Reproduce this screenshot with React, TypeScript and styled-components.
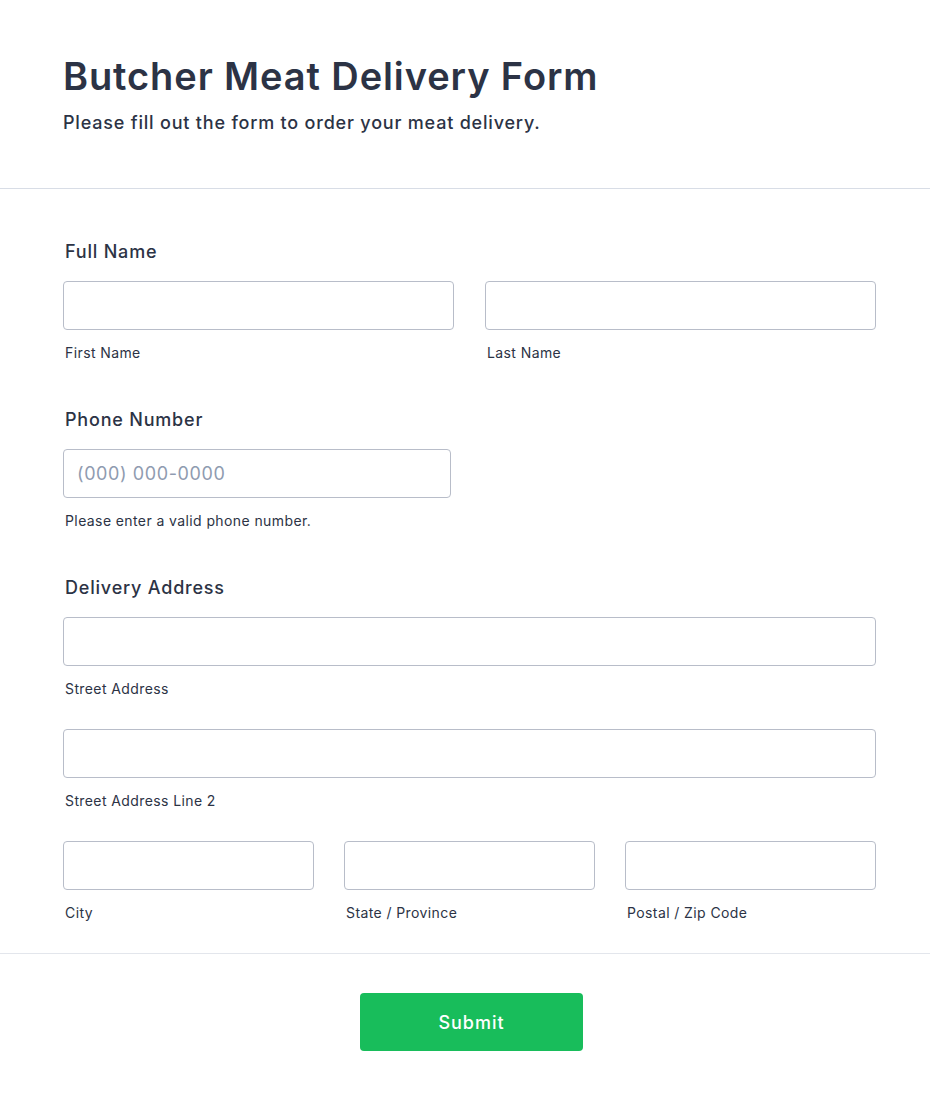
import React from 'react';
import styled, { createGlobalStyle } from 'styled-components';

const GlobalStyle = createGlobalStyle`
  * { box-sizing: border-box; }
  body {
    margin: 0;
    background: #ffffff;
    font-family: Inter, "Noto Sans", sans-serif;
    color: #2c3345;
  }
`;

const Page = styled.main`
  width: 930px;
  background: #ffffff;
`;

const Header = styled.header`
  padding: 52px 63px 52px;
  border-bottom: 1px solid #d8dde6;
  > h1 {
    margin: 0;
    font-size: 38px;
    line-height: 48px;
    font-weight: 600;
    letter-spacing: 0.9px;
  }
  > p {
    margin: 10px 0 0;
    font-size: 18px;
    line-height: 26px;
    font-weight: 500;
    letter-spacing: 0.8px;
  }
`;

const FormBody = styled.section`
  padding: 51px 54px 31px 63px;
  border-bottom: 1px solid #e3e6ec;
`;

const Field = styled.div`
  & + & {
    margin-top: 46px;
  }
`;

const Label = styled.div`
  font-size: 18px;
  line-height: 24px;
  font-weight: 500;
  letter-spacing: 0.8px;
  padding-left: 2px;
  margin-bottom: 17px;
`;

const Row = styled.div<{ $cols: number }>`
  display: grid;
  grid-template-columns: repeat(${(p) => p.$cols}, 1fr);
  column-gap: ${(p) => (p.$cols === 3 ? 30 : 31)}px;
  & + & {
    margin-top: 31px;
  }
`;

const Cell = styled.div<{ $width?: number }>`
  width: ${(p) => (p.$width ? `${p.$width}px` : 'auto')};
`;

const Input = styled.input`
  display: block;
  width: 100%;
  height: 49px;
  border: 1px solid #b8bdc9;
  border-radius: 4px;
  background: #ffffff;
  padding: 0 13px;
  font-family: inherit;
  font-size: 18px;
  letter-spacing: 0.6px;
  color: #2c3345;
  outline: none;
  &::placeholder {
    color: #8f9bb0;
  }
`;

const Sub = styled.div`
  margin-top: 14px;
  font-size: 14px;
  line-height: 18px;
  letter-spacing: 0.4px;
  padding-left: 2px;
  color: #2c3345;
`;

const Footer = styled.div`
  display: flex;
  justify-content: center;
  padding: 39px 52px 50px 65px;
`;

const SubmitButton = styled.button`
  width: 223px;
  height: 58px;
  border: none;
  border-radius: 4px;
  background: #18bd5b;
  color: #ffffff;
  font-family: inherit;
  font-size: 18px;
  font-weight: 500;
  letter-spacing: 1px;
  cursor: pointer;
`;

export default function App() {
  return (
    <Page>
      <GlobalStyle />
      <Header>
        <h1>Butcher Meat Delivery Form</h1>
        <p>Please fill out the form to order your meat delivery.</p>
      </Header>
      <FormBody>
        <Field>
          <Label>Full Name</Label>
          <Row $cols={2}>
            <Cell>
              <Input type="text" />
              <Sub>First Name</Sub>
            </Cell>
            <Cell>
              <Input type="text" />
              <Sub>Last Name</Sub>
            </Cell>
          </Row>
        </Field>
        <Field>
          <Label>Phone Number</Label>
          <Cell $width={388}>
            <Input type="tel" placeholder="(000) 000-0000" />
            <Sub>Please enter a valid phone number.</Sub>
          </Cell>
        </Field>
        <Field>
          <Label>Delivery Address</Label>
          <Row $cols={1}>
            <Cell>
              <Input type="text" />
              <Sub>Street Address</Sub>
            </Cell>
          </Row>
          <Row $cols={1}>
            <Cell>
              <Input type="text" />
              <Sub>Street Address Line 2</Sub>
            </Cell>
          </Row>
          <Row $cols={3}>
            <Cell>
              <Input type="text" />
              <Sub>City</Sub>
            </Cell>
            <Cell>
              <Input type="text" />
              <Sub>State / Province</Sub>
            </Cell>
            <Cell>
              <Input type="text" />
              <Sub>Postal / Zip Code</Sub>
            </Cell>
          </Row>
        </Field>
      </FormBody>
      <Footer>
        <SubmitButton type="submit">Submit</SubmitButton>
      </Footer>
    </Page>
  );
}
